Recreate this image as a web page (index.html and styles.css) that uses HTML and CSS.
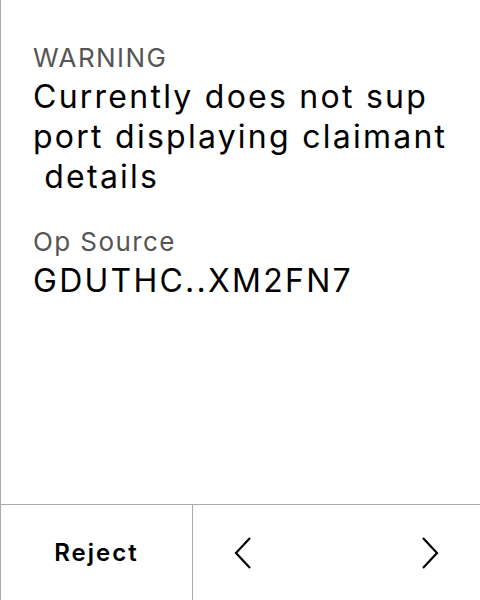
FILE: index.html
```html
<!DOCTYPE html>
<html>
<head>
<meta charset="utf-8">
<link rel="stylesheet" href="styles.css">
</head>
<body>
<div class="screen">
  <main class="content">
    <div class="field">
      <div class="label">WARNING</div>
      <div class="value">Currently does not sup<br>port displaying claimant<br>&nbsp;details</div>
    </div>
    <div class="field">
      <div class="label">Op Source</div>
      <div class="value">GDUTHC..XM2FN7</div>
    </div>
  </main>
  <footer class="bar">
    <div class="reject">Reject</div>
    <div class="nav">
      <div class="arrow">
        <svg width="20" height="32" viewBox="0 0 20 32"><path d="M17 1 L3 16 L17 31" fill="none" stroke="#000" stroke-width="2.2"/></svg>
      </div>
      <div class="arrow">
        <svg width="20" height="32" viewBox="0 0 20 32"><path d="M3 1 L17 16 L3 31" fill="none" stroke="#000" stroke-width="2.2"/></svg>
      </div>
    </div>
  </footer>
</div>
</body>
</html>
```
FILE: styles.css
```css
html, body {
  margin: 0;
  padding: 0;
  background: #fff;
}
.screen {
  width: 480px;
  height: 600px;
  box-sizing: border-box;
  border-left: 1px solid #aaa;
  display: flex;
  flex-direction: column;
  font-family: Inter, "Noto Sans", sans-serif;
  color: #000;
}
.content {
  flex: 1;
  padding: 42px 0 0 32px;
}
.field {
  margin-bottom: 29px;
}
.label {
  font-size: 26px;
  line-height: 32px;
  letter-spacing: 1.4px;
  color: #555;
}
.value {
  font-size: 32px;
  line-height: 40px;
  letter-spacing: 2.25px;
  margin-top: 3px;
}
.bar {
  height: 95px;
  border-top: 1px solid #aaa;
  display: flex;
}
.reject {
  width: 191px;
  border-right: 1px solid #aaa;
  display: flex;
  align-items: center;
  justify-content: center;
  font-size: 24px;
  font-weight: 600;
  letter-spacing: 2px;
}
.nav {
  flex: 1;
  display: flex;
  justify-content: space-between;
  align-items: center;
}
.arrow {
  width: 100px;
  display: flex;
  justify-content: center;
}
```
